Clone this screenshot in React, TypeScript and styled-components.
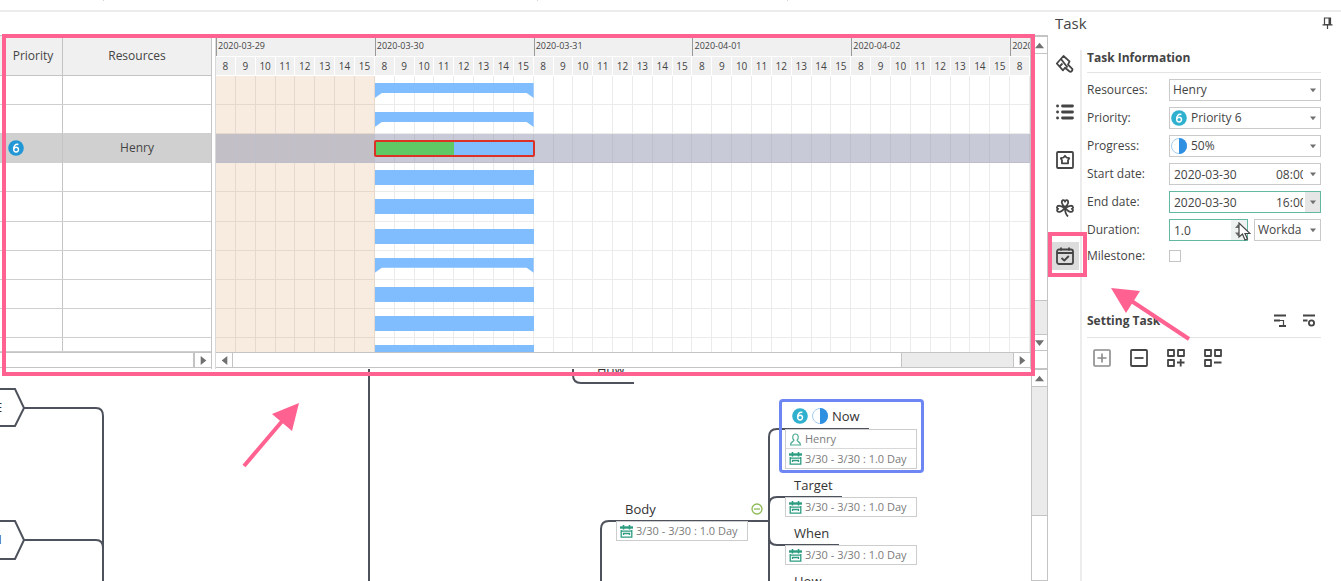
import React from 'react';
import styled, { createGlobalStyle } from 'styled-components';

const pink = '#ff6190';
const line = '#c4c4c4';
const ink = '#444';

const GlobalStyle = createGlobalStyle`
  *, *::before, *::after { box-sizing: border-box; }
  body { margin: 0; background: #fff; color: ${ink}; font: 12px/16px "Open Sans", "Noto Sans", sans-serif; }
  button, input, select { font: inherit; color: inherit; margin: 0; padding: 0; border: 0; background: none; border-radius: 0; outline: none; }
  svg { display: block; }
`;

const Page = styled.div`
  display: flex;
  flex-direction: column;
  min-height: 100vh;
  overflow: hidden;
`;
const RibbonEdge = styled.div`
  display: flex;
  height: 12px;
  padding-left: 103px;
  border-bottom: 2px solid #ececec;
`;
const RibbonTick = styled.i<{ $gap: number }>`
  width: 1px;
  height: 1px;
  margin-right: ${p => p.$gap}px;
  background: #d4d4d4;
`;
const Main = styled.main`
  flex: 1;
  display: grid;
  grid-template-columns: minmax(0, 1fr) 293px;
`;
const Workspace = styled.section`
  display: flex;
  flex-direction: column;
  padding-top: 23px;
`;

/* Gantt */
const Gantt = styled.div`
  position: relative;
  display: grid;
  grid-template-columns: 212px minmax(0, 1fr) 18px;
  height: 334px;
  border-top: 1px solid ${line};
`;
const Highlight = styled.div`
  position: absolute;
  left: 2px;
  right: 13px;
  top: -2px;
  bottom: -7px;
  border: 4px solid ${pink};
  pointer-events: none;
  z-index: 3;
`;
const Pane = styled.div`
  display: flex;
  flex-direction: column;
  border-right: 1px solid ${line};
`;
const Sheet = styled.table`
  display: block;
  thead, tbody, tr { display: grid; }
  tr { grid-template-columns: 63px 1fr; }
  thead { height: 40px; background: #f0f0f0; border-bottom: 1px solid ${line}; }
  tbody { height: 276px; grid-template-rows: repeat(9, minmax(0, 1fr)) 14px; }
  th, td { display: flex; align-items: center; justify-content: center; padding: 0; font-weight: 400; border-right: 1px solid ${line}; }
  th:last-child, td:last-child { border-right: 0; }
  th:first-child { padding-left: 4px; }
  td:first-child { justify-content: flex-start; padding-left: 8px; }
`;
const SheetRow = styled.tr<{ $selected: boolean }>`
  background: ${p => (p.$selected ? '#d0d0d0' : '#fff')};
  border-bottom: 1px solid #cfcfcf;
`;
const Chart = styled.div`
  display: flex;
  flex-direction: column;
  margin-left: 3px;
  border-left: 1px solid #d8d8d8;
`;
const HourGrid = styled.div`
  display: grid;
  grid-template-columns: repeat(41, minmax(0, 1fr));
`;
const DayBar = styled(HourGrid)`
  height: 20px;
  background: #f0f0f0;
`;
const Day = styled.div<{ $start: number; $end: number }>`
  grid-column: ${p => p.$start} / ${p => p.$end};
  border-left: 1px solid #999;
  padding: 3px 0 0 1px;
  font-size: 9px;
  line-height: 14px;
  overflow: hidden;
  white-space: nowrap;
`;
const HourBar = styled(HourGrid)`
  height: 20px;
  padding: 1px 0;
`;
const Hour = styled.div`
  background: #f0f0f0;
  border-right: 1px solid #fff;
  text-align: center;
  font-size: 10px;
  line-height: 18px;
`;
const Rows = styled.div`
  display: grid;
  grid-template-rows: repeat(9, minmax(0, 1fr)) 14px;
  height: 276px;
  overflow: hidden;
`;
const cellColor = (off: boolean, sel: boolean) => sel ? (off ? '#c3bfc6' : '#c8cad8') : off ? '#f8ebdf' : '#fff';
const Cell = styled.i<{ $off: boolean; $selected: boolean; $col: number }>`
  grid-column: ${p => p.$col};
  grid-row: 1;
  background: ${p => cellColor(p.$off, p.$selected)};
  border: 0 solid ${p => (p.$selected ? '#bfbfcb' : p.$off ? '#e5d9ce' : '#ebebeb')};
  border-width: 0 1px 1px 0;
`;
const Bar = styled.div`
  grid-column: 9 / 17;
  grid-row: 1;
  height: 15px;
  margin-top: 7px;
  background: #80bdff;
`;
const SummaryBar = styled(Bar)`
  clip-path: polygon(0 0, 100% 0, 100% 100%, calc(100% - 7px) 10px, 7px 10px, 0 100%);
`;
const SelectedBar = styled(Bar)`
  height: 17px;
  margin: 6px -1px 0;
  border: 2px solid #dc3226;
  border-radius: 2px;
`;
const Progress = styled.div`
  height: 100%;
  background: #5fc966;
`;

/* Scroll bars */
const HScroll = styled.div`
  display: flex;
  height: 16px;
  border: 1px solid ${line};
  border-left: 0;
  border-right: 0;
  background: #ebebeb;
`;
const VScroll = styled.div`
  display: flex;
  flex-direction: column;
  background: #ebebeb;
  border: 1px solid ${line};
`;
const Thumb = styled.div<{ $grow: number }>`
  flex: ${p => p.$grow} 1 0;
  background: #fff;
  border: 0 solid ${line};
  ${VScroll} & { border-bottom-width: 1px; }
  ${VScroll} &:last-child { border-width: 1px 0 0; }
  ${HScroll} & { border-right-width: 1px; }
`;
const Track = styled.div<{ $grow: number }>`
  flex: ${p => p.$grow} 1 0;
`;
const ScrollButton = styled.button`
  display: grid;
  place-items: center;
  flex: 0 0 17px;
  background: #fff;
  border: 0 solid ${line};
  ${VScroll} & { border-width: 1px 0; }
  ${VScroll} &:first-child { border-top-width: 0; }
  ${HScroll} & { border-left-width: 1px; }
  ${HScroll} &:first-child { border-width: 0 1px 0 0; }
`;
const Corner = styled.div`
  height: 17px;
  background: #fff;
`;

/* Mind map */
const MapArea = styled.div`
  flex: 1;
  display: grid;
  grid-template-columns: minmax(0, 1fr) 17px;
  min-height: 211px;
`;
const Canvas = styled.div`
  position: relative;
  overflow: hidden;
`;
const Wires = styled.svg`
  position: absolute;
  left: 0;
  top: 0;
  width: 100%;
  height: 100%;
`;
const Node = styled.div<{ $x: number; $y: number }>`
  position: absolute;
  left: ${p => p.$x}px;
  top: ${p => p.$y}px;
  display: flex;
  align-items: center;
  gap: 4px;
  font-size: 13px;
  line-height: 18px;
  color: #333;
  white-space: nowrap;
`;
const Card = styled.div<{ $x: number; $y: number }>`
  position: absolute;
  left: ${p => p.$x}px;
  top: ${p => p.$y}px;
  width: 132px;
  border: 1px solid #cdcdcd;
  background: #fff;
`;
const CardLine = styled.div`
  display: flex;
  align-items: center;
  gap: 3px;
  height: 18px;
  padding-left: 3px;
  font-size: 11px;
  color: #7c7c7c;
  white-space: nowrap;
  & + & { height: 20px; border-top: 1px solid #d9d9d9; }
`;
const Selection = styled.div`
  position: absolute;
  left: 779px;
  top: 30px;
  width: 145px;
  height: 74px;
  border: 3px solid #6d86f3;
  border-radius: 4px;
`;

/* Task panel */
const Side = styled.aside`
  display: grid;
  grid-template-rows: 38px 1fr;
`;
const SideHead = styled.header`
  display: flex;
  align-items: flex-start;
  justify-content: space-between;
  padding: 1px 8px 0 7px;
`;
const SideTitle = styled.h1`
  margin: 0;
  font-size: 15px;
  line-height: 20px;
  font-weight: 400;
`;
const PlainButton = styled.button`
  display: grid;
  place-items: center;
`;
const PinButton = styled(PlainButton)`
  height: 20px;
`;
const SideBody = styled.div`
  position: relative;
  display: grid;
  grid-template-columns: 34px minmax(0, 1fr);
`;
const Rail = styled.nav`
  display: flex;
  flex-direction: column;
  gap: 20px;
  padding: 0 0 0 3px;
  border-right: 2px solid #ececec;
`;
const RailButton = styled.button<{ $active?: boolean }>`
  position: relative;
  display: grid;
  place-items: center;
  width: 28px;
  height: 28px;
  background: ${p => (p.$active ? '#dcdcdc' : 'transparent')};
  &::after {
    content: ${p => (p.$active ? '""' : 'none')};
    position: absolute;
    inset: -10px -8px -7px -3px;
    border: 4px solid ${pink};
    z-index: 2;
  }
`;
const Form = styled.form`
  padding: 0 20px 0 5px;
`;
const SectionHead = styled.div<{ $tools?: boolean }>`
  display: flex;
  align-items: center;
  gap: 15px;
  height: ${p => (p.$tools ? 26 : 23)}px;
  padding: ${p => (p.$tools ? '0 5px 8px 0' : '0 0 6px')};
  border-bottom: 1px solid #e4e4e4;
`;
const SectionTitle = styled.h2`
  flex: 1;
  margin: 0;
  font-size: 12px;
  line-height: 16px;
  font-weight: 700;
`;
const Fields = styled.div`
  display: flex;
  flex-direction: column;
  gap: 6px;
  padding-top: 6px;
  height: 239px;
`;
const Field = styled.div`
  display: grid;
  grid-template-columns: 82px minmax(0, 1fr);
  align-items: center;
  min-height: 18px;
`;
const Split = styled.div`
  display: grid;
  grid-template-columns: 79px minmax(0, 1fr);
  gap: 6px;
`;
const Box = styled.div<{ $focus?: boolean; $icon?: boolean }>`
  display: flex;
  align-items: center;
  height: 22px;
  padding-left: ${p => (p.$icon ? 1 : 3)}px;
  border: 1px solid ${p => (p.$focus ? '#62b8a2' : '#cacaca')};
  background: #fff;
`;
const Select = styled.select<{ $indent?: boolean }>`
  flex: 1;
  min-width: 0;
  height: 20px;
  padding-left: ${p => (p.$indent ? 4 : 0)}px;
  appearance: none;
`;
const DateInput = styled.input`
  flex: 1;
  min-width: 0;
  height: 20px;
  padding-left: 1px;
`;
const TimeInput = styled.input`
  width: 27px;
  height: 20px;
  margin-right: 2px;
`;
const DropButton = styled.button<{ $hot?: boolean }>`
  display: grid;
  place-items: center;
  width: 15px;
  height: 20px;
  background: ${p => (p.$hot ? '#e6e6e6' : 'transparent')};
`;
const Spinner = styled.div`
  position: relative;
  display: flex;
  flex-direction: column;
  justify-content: space-between;
  width: 16px;
  height: 20px;
  padding: 3px 4px;
  background: #eef3f2;
`;
const Pointer = styled.svg`
  position: absolute;
  left: 7px;
  top: 2px;
  z-index: 2;
`;
const Check = styled.input`
  appearance: none;
  width: 12px;
  height: 12px;
  border: 1px solid #c4c4c4;
  background: #fff;
`;
const Tools = styled.div`
  display: flex;
  gap: 17px;
  padding: 10px 0 0 5px;
`;
const SideArrow = styled.svg`
  position: absolute;
  left: 60px;
  top: 234px;
  z-index: 2;
  pointer-events: none;
`;

const Badge = ({ color = '#2fb0cf' }: { color?: string }) => (
  <svg width="16" height="16" viewBox="0 0 16 16" fill="none" aria-hidden="true">
    <circle cx="8" cy="8" r="7.800" fill={color} />
    <path d="M10.400 4.500C7.600 3.500 5.600 5.800 5.600 9.200" stroke="#fff" strokeWidth="1.400" />
    <circle cx="8.100" cy="9.600" r="2.400" stroke="#fff" strokeWidth="1.400" />
  </svg>
);
const Half = () => (
  <svg width="16" height="16" viewBox="0 0 16 16" fill="none" aria-hidden="true">
    <circle cx="8" cy="8" r="7.500" stroke="#a5cdf0" />
    <path d="M8 0a8 8 0 0 1 0 16z" fill="#2f8fe0" />
  </svg>
);
const CalIcon = () => (
  <svg width="13" height="13" viewBox="0 0 13 13" fill="none" stroke="#2d9c80" aria-hidden="true">
    <path d="M0 2.500h13" strokeWidth="2.400" />
    <path d="M3.500 0v4.500M9.500 0v4.500" strokeWidth="1.600" />
    <path d="M1.200 5v7.200h10.600V5M1.200 6.200h10.600M3.500 10V8.500h6V10" strokeWidth="1.300" />
  </svg>
);
const PersonIcon = () => (
  <svg width="13" height="13" viewBox="0 0 13 13" fill="none" stroke="#4fae96" strokeWidth="1.200" aria-hidden="true">
    <path d="M5 7.200C2.800 5.400 3.400 1 6.500 1S10.200 5.400 8 7.200c0 1.300 3.500 1.300 3.500 4.800h-10C1.500 8.500 5 8.500 5 7.200z" />
  </svg>
);
const Caret = ({ dir = 'down', size = 6 }: { dir?: 'down' | 'up' | 'left' | 'right'; size?: number }) => {
  const d = { down: 'M0 2h8L4 7z', up: 'M0 6.500h8L4 1.500z', left: 'M6.500 0v8L1.500 4z', right: 'M1.500 0v8L6.500 4z' }[dir];
  return <svg width={size} height={size} viewBox="0 0 8 8" fill="#707070" aria-hidden="true"><path d={d} /></svg>;
};

const railIcons: { name: string; art: React.ReactNode }[] = [
  { name: 'Format', art: <><path d="M7.500 1 .800 8.500 7 15.300l2-2.600 4.300 3.600c1.700 1.200 4-1 2.700-2.700l-4-4 1.500-3.200zM5 4l6.500 8.500M3.500 11.500l3-3" /></> },
  { name: 'Outline', art: <><path d="M6.500 3h10M6.500 9h10M6.500 15h10" strokeWidth="2.800" strokeLinecap="round" /><path d="M1.500 3h.1M1.500 9h.1M1.500 15h.1" strokeWidth="2.800" strokeLinecap="round" /></> },
  { name: 'Symbols', art: <><rect x="1" y="1" width="16" height="16" rx="1" /><path d="m9 4.800 1.500 1.700 2.700.700-1.200 2.200.1 2.900H5.900L6 9.400 4.800 7.200l2.700-.700z" /></> },
  { name: 'Clip art', art: <path d="M9 8C5.500 6 5 2 7 1.200c1-.3 2 .5 2 1.500 0-1 1-1.800 2-1.500 2 .8 1.500 4.800-2 6.800zM8.500 9C5.500 6.500 1.500 6 1 8c-.3 1 .5 1.800 1.300 1.800-1 .2-1.500 1.200-1 2.200 1.200 2 5.200.5 7.200-3zM9.500 9c3-2.500 7-3 7.500-1 .3 1-.5 1.800-1.300 1.800 1 .2 1.500 1.200 1 2.200-1.200 2-5.200.5-7.200-3zM9 9c0 3.500.8 6.500 3 8.500" /> },
  { name: 'Task', art: <><rect x="1" y="2.500" width="16" height="14.500" rx="2" /><path d="M1 6h16M5 .5v3M13 .5v3M5.500 11l2.800 2.500 4.500-4.500" /></> },
];

const hours = [8, 9, 10, 11, 12, 13, 14, 15];
const days = ['2020-03-29', '2020-03-30', '2020-03-31', '2020-04-01', '2020-04-02', '2020-04-03'];
const tasks = ['summary', 'summary', 'selected', 'task', 'task', 'task', 'summary', 'task', 'task', 'task'];
const columns = Array.from({ length: 41 }, (_, i) => i);
const span = '3/30 - 3/30 : 1.0 Day';

const Duration = () => <CardLine><CalIcon />{span}</CardLine>;

const GanttPanel = () => (
  <Gantt>
    <Pane>
      <Sheet>
        <thead><tr><th scope="col">Priority</th><th scope="col">Resources</th></tr></thead>
        <tbody>
          {tasks.map((kind, i) => (
            <SheetRow key={i} $selected={kind === 'selected'}>
              <td>{kind === 'selected' && <Badge color="#2297d6" />}</td>
              <td>{kind === 'selected' && 'Henry'}</td>
            </SheetRow>
          ))}
        </tbody>
      </Sheet>
      <HScroll>
        <Thumb $grow={1} />
        <ScrollButton aria-label="Scroll columns right"><Caret dir="right" size={9} /></ScrollButton>
      </HScroll>
    </Pane>
    <Chart>
      <DayBar>
        {days.map((d, i) => <Day key={d} $start={i * 8 + 1} $end={Math.min(i * 8 + 9, 42)}>{d}</Day>)}
      </DayBar>
      <HourBar>{columns.map(c => <Hour key={c}>{hours[c % 8]}</Hour>)}</HourBar>
      <Rows>
        {tasks.map((kind, i) => (
          <HourGrid key={i}>
            {columns.map(c => <Cell key={c} $col={c + 1} $off={c < 8} $selected={kind === 'selected'} />)}
            {kind === 'summary' && <SummaryBar />}
            {kind === 'task' && <Bar />}
            {kind === 'selected' && <SelectedBar><Progress style={{ width: '50%' }} /></SelectedBar>}
          </HourGrid>
        ))}
      </Rows>
      <HScroll>
        <ScrollButton aria-label="Scroll chart left"><Caret dir="left" size={9} /></ScrollButton>
        <Thumb $grow={6} />
        <Track $grow={1} />
        <ScrollButton aria-label="Scroll chart right"><Caret dir="right" size={9} /></ScrollButton>
      </HScroll>
    </Chart>
    <VScroll>
      <ScrollButton aria-label="Scroll rows up"><Caret dir="up" size={9} /></ScrollButton>
      <Thumb $grow={22} />
      <Track $grow={3} />
      <ScrollButton aria-label="Scroll rows down"><Caret size={9} /></ScrollButton>
      <Corner />
    </VScroll>
    <Highlight />
  </Gantt>
);

const MindMap = () => (
  <MapArea>
    <Canvas>
      <Wires fill="none" stroke="#4d525c" strokeWidth="2" aria-hidden="true">
        <path d="M-2 20H15L24 39 15 57H-2M-2 152H15L24 171 15 190H-2" />
        <path d="M24 39H96Q103 39 103 47V2000M24 171H96Q103 171 103 179M369 0V2000" />
        <path d="M573 0V6Q573 14 581 14H634" />
        <path d="M601 2000V160Q601 152 609 152H769M769 2000V68Q769 60 777 60H869M769 136Q769 128 777 128H842M769 168Q769 176 777 176H839" />
        <g stroke="#8dbb55" strokeWidth="1.300"><circle cx="757" cy="140" r="5" /><path d="M754 140h6" /></g>
        <g stroke={pink} strokeWidth="4"><path d="m244 97 40-47" /><path d="m299 34-27 11 20 17z" fill={pink} stroke="none" /></g>
      </Wires>
      <Node $x={-5} $y={29}>E</Node>
      <Node $x={-8} $y={161}>N</Node>
      <Node $x={597} $y={-9}>How</Node>
      <Node $x={625} $y={131}>Body</Node>
      <Card $x={616} $y={152}><Duration /></Card>
      <Card $x={785} $y={60}><CardLine><PersonIcon />Henry</CardLine><Duration /></Card>
      <Node $x={792} $y={38}><Badge /><Half />Now</Node>
      <Node $x={794} $y={107}>Target</Node>
      <Card $x={785} $y={128}><Duration /></Card>
      <Node $x={794} $y={155}>When</Node>
      <Card $x={785} $y={176}><Duration /></Card>
      <Node $x={794} $y={203}>How</Node>
      <Selection />
    </Canvas>
    <VScroll>
      <ScrollButton aria-label="Scroll map up"><Caret dir="up" size={9} /></ScrollButton>
      <Track $grow={2} />
      <Thumb $grow={1} />
    </VScroll>
  </MapArea>
);

const DateField = ({ id, label, time, focus }: { id: string; label: string; time: string; focus?: boolean }) => (
  <Field>
    <label htmlFor={id}>{label}</label>
    <Box $focus={focus}>
      <DateInput id={id} defaultValue="2020-03-30" />
      <TimeInput aria-label={`${label} time`} defaultValue={time} />
      <DropButton type="button" $hot={focus} aria-label={`Pick ${label}`}><Caret /></DropButton>
    </Box>
  </Field>
);

const TaskPanel = () => (
  <Side>
    <SideHead>
      <SideTitle>Task</SideTitle>
      <PinButton aria-label="Pin panel">
        <svg width="11" height="12" viewBox="0 0 11 12" fill="none" stroke={ink} strokeWidth="1.200">
          <path d="M2.500 1h6v6.500h-6zM.5 7.800h10M5.500 8v4" /><path d="M7.500 1v6.500" strokeWidth="2" />
        </svg>
      </PinButton>
    </SideHead>
    <SideBody>
      <Rail>
        {railIcons.map(icon => (
          <RailButton key={icon.name} aria-label={icon.name} $active={icon.name === 'Task'}>
            <svg width="18" height="18" viewBox="0 0 18 18" fill="none" stroke={ink} strokeWidth="1.800" strokeLinejoin="round">{icon.art}</svg>
          </RailButton>
        ))}
      </Rail>
      <Form>
        <SectionHead><SectionTitle>Task Information</SectionTitle></SectionHead>
        <Fields>
          <Field>
            <label htmlFor="resources">Resources:</label>
            <Box><Select id="resources"><option>Henry</option></Select><DropButton type="button" aria-label="Open resources"><Caret /></DropButton></Box>
          </Field>
          <Field>
            <label htmlFor="priority">Priority:</label>
            <Box $icon><Badge /><Select id="priority" $indent><option>Priority 6</option></Select><DropButton type="button" aria-label="Open priority"><Caret /></DropButton></Box>
          </Field>
          <Field>
            <label htmlFor="progress">Progress:</label>
            <Box $icon><Half /><Select id="progress" $indent><option>50%</option></Select><DropButton type="button" aria-label="Open progress"><Caret /></DropButton></Box>
          </Field>
          <DateField id="start" label="Start date:" time="08:00" />
          <DateField id="end" label="End date:" time="16:00" focus />
          <Field>
            <label htmlFor="duration">Duration:</label>
            <Split>
              <Box $focus>
                <DateInput id="duration" defaultValue="1.0" />
                <Spinner>
                  <Caret dir="up" />
                  <Caret />
                  <Pointer width="13" height="19" viewBox="0 0 13 19" fill="#fff" stroke="#444" strokeWidth="1.200" aria-hidden="true">
                    <path d="M1 1v14l3.500-3 2.500 6 2.500-1-2.500-5.500h5z" />
                  </Pointer>
                </Spinner>
              </Box>
              <Box><Select aria-label="Duration unit"><option>Workda</option></Select><DropButton type="button" aria-label="Open units"><Caret /></DropButton></Box>
            </Split>
          </Field>
          <Field><label htmlFor="milestone">Milestone:</label><Check id="milestone" type="checkbox" /></Field>
        </Fields>
        <SectionHead $tools>
          <SectionTitle>Setting Task</SectionTitle>
          <PlainButton type="button" aria-label="Sort tasks">
            <svg width="14" height="13" viewBox="0 0 14 13" fill="none" stroke={ink} strokeWidth="1.800"><path d="M1 1.500h12M1 6.500h6M6 12h7" /><path d="M7 6.500h3.500v5" strokeWidth="1.200" /></svg>
          </PlainButton>
          <PlainButton type="button" aria-label="Task options">
            <svg width="14" height="13" viewBox="0 0 14 13" fill="none" stroke={ink} strokeWidth="1.800"><path d="M1 1.500h12M1 6.500h4.500" /><circle cx="9.500" cy="9" r="2.600" /></svg>
          </PlainButton>
        </SectionHead>
        <Tools>
          <PlainButton type="button" aria-label="Expand">
            <svg width="20" height="20" viewBox="0 0 20 20" fill="none" stroke="#8a8a8a" strokeWidth="1.600"><rect x="2" y="2" width="16" height="16" rx="1" /><path d="M5.500 10h9M10 5.500v9" /></svg>
          </PlainButton>
          <PlainButton type="button" aria-label="Collapse">
            <svg width="20" height="20" viewBox="0 0 20 20" fill="none" stroke={ink} strokeWidth="1.800"><rect x="2" y="2" width="16" height="16" rx="1" /><path d="M5.500 10h9" /></svg>
          </PlainButton>
          <PlainButton type="button" aria-label="Add group">
            <svg width="20" height="20" viewBox="0 0 20 20" fill="none" stroke={ink} strokeWidth="1.800" strokeLinejoin="round"><path d="M2 2h6v6H2zM12 2h6v6h-6zM2 12h6v6H2zM11 14.500h7.500M14.700 11v7.500" /></svg>
          </PlainButton>
          <PlainButton type="button" aria-label="Remove group">
            <svg width="20" height="20" viewBox="0 0 20 20" fill="none" stroke={ink} strokeWidth="1.800" strokeLinejoin="round"><path d="M2 2h6v6H2zM12 2h6v6h-6zM2 12h6v6H2zM11 14.500h7.500" /></svg>
          </PlainButton>
        </Tools>
      </Form>
      <SideArrow width="90" height="60" viewBox="0 0 90 60" aria-hidden="true">
        <path d="M3 4 32 7 18 29z" fill={pink} />
        <path d="M22 16 81 55" stroke={pink} strokeWidth="4" />
      </SideArrow>
    </SideBody>
  </Side>
);

export default function App() {
  return (
    <Page>
      <GlobalStyle />
      <RibbonEdge><RibbonTick $gap={433} /><RibbonTick $gap={249} /><RibbonTick $gap={0} /></RibbonEdge>
      <Main>
        <Workspace>
          <GanttPanel />
          <MindMap />
        </Workspace>
        <TaskPanel />
      </Main>
    </Page>
  );
}
